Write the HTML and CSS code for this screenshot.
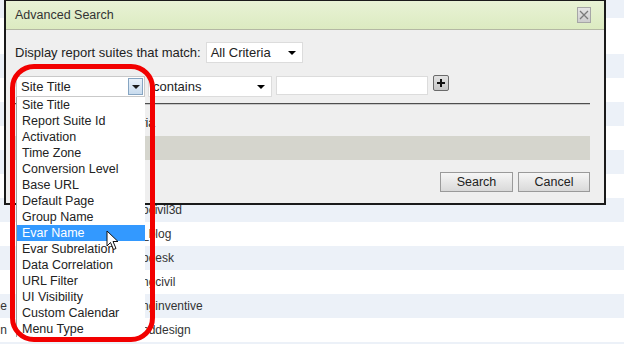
FILE: index.html
```html
<!DOCTYPE html>
<html lang="en">
<head>
    <meta charset="UTF-8">
    <title>Advanced Search</title>
    <link rel="stylesheet" href="styles.css">
</head>
<body>
    <div class="page">
        <div class="band-top"></div>
        <div class="band-head"></div>
        <div class="row alt"></div>
        <div class="row"></div>
        <div class="row alt"></div>
        <div class="row"></div>
        <div class="row alt"></div>
        <div class="row"></div>
        <div class="row alt"><span class="cell-name"></span><span class="cell-id">pcivil3d</span></div>
        <div class="row"><span class="cell-name"></span><span class="cell-id">_blog</span></div>
        <div class="row alt"><span class="cell-name"></span><span class="cell-id">pdesk</span></div>
        <div class="row"><span class="cell-name"></span><span class="cell-id">ngcivil</span></div>
        <div class="row alt"><span class="cell-name">e</span><span class="cell-id">nginventive</span></div>
        <div class="row"><span class="cell-name">n</span><span class="cell-id">nddesign</span></div>
        <div class="row alt last"></div>
    </div>

    <div class="dialog">
        <div class="dialog-title">
            <span>Advanced Search</span>
            <button class="close-btn">
                <svg width="10" height="10" viewBox="0 0 10 10"><path d="M1 1 L9 9 M9 1 L1 9" stroke="#7a7a7a" stroke-width="1.3"/></svg>
            </button>
        </div>
        <div class="dialog-body">
            <div class="match-row">
                <span>Display report suites that match:</span>
                <div class="select select-match"><span>All Criteria</span><i class="caret"></i></div>
            </div>

            <div class="criteria-row">
                <div class="select select-field">
                    <span>Site Title</span>
                    <span class="drop-btn"><i class="caret"></i></span>
                    <ul class="options">
                        <li>Site Title</li>
                        <li>Report Suite Id</li>
                        <li>Activation</li>
                        <li>Time Zone</li>
                        <li>Conversion Level</li>
                        <li>Base URL</li>
                        <li>Default Page</li>
                        <li>Group Name</li>
                        <li class="active">Evar Name</li>
                        <li>Evar Subrelation</li>
                        <li>Data Correlation</li>
                        <li>URL Filter</li>
                        <li>UI Visibility</li>
                        <li>Custom Calendar</li>
                        <li>Menu Type</li>
                    </ul>
                </div>
                <div class="select select-op"><span>contains</span><i class="caret"></i></div>
                <input class="value-input" type="text">
                <button class="add-btn">
                    <svg width="8" height="8" viewBox="0 0 8 8"><path d="M4 0 V8 M0 4 H8" stroke="#111" stroke-width="2"/></svg>
                </button>
            </div>

            <div class="rule"></div>
            <div class="criteria-label">Criteria</div>
            <div class="results-bar"></div>

            <div class="actions">
                <button class="btn btn-search">Search</button>
                <button class="btn btn-cancel">Cancel</button>
            </div>
        </div>
    </div>

    <div class="highlight-ring"></div>

    <svg class="cursor" width="14" height="21" viewBox="0 0 14 21">
        <path d="M1 1 L1 16 L4.5 12.5 L7.5 19.5 L10 18.5 L7 11.5 L12 11.5 Z" fill="#fff" stroke="#111" stroke-width="1" stroke-linejoin="round"/>
    </svg>
</body>
</html>
```

FILE: styles.css
```css
* {
    margin: 0;
    padding: 0;
    box-sizing: border-box;
}

html {
    overflow: hidden;
}

body {
    width: 624px;
    height: 344px;
    overflow: hidden;
    position: relative;
    font-family: "Liberation Sans", Arial, sans-serif;
    background-color: #fff;
    color: #333;
}

/* page behind the dialog */
.band-top {
    height: 18px;
    background-color: #ecf1f8;
}

.band-head {
    height: 36px;
}

.row {
    display: flex;
    align-items: center;
    height: 24px;
    font-size: 12px;
    white-space: nowrap;
}

.row.alt {
    background-color: #ecf1f8;
}

.row.last {
    height: 2px;
}

.cell-name {
    width: 7px;
    display: flex;
    justify-content: flex-end;
}

.cell-id {
    margin-left: 135px;
}

/* dialog */
.dialog {
    position: absolute;
    left: 4px;
    top: -1px;
    width: 602px;
    border: 2px solid #1a1a1a;
    background-color: #efefef;
    font-size: 13px;
    color: #222;
}

.dialog-title {
    height: 29px;
    display: flex;
    align-items: center;
    justify-content: space-between;
    padding: 0 13px 0 9px;
    background: linear-gradient(#e8f2d5, #dcebc1);
    border-bottom: 1px solid #b4b8a4;
    font-size: 12.5px;
    color: #333;
}

.close-btn {
    width: 14px;
    height: 16px;
    display: flex;
    align-items: center;
    justify-content: center;
    border: 1px solid #a6a6a6;
    background: linear-gradient(#e4e4e4, #cdcdcd);
}

.dialog-body {
    padding: 12px 14px 11px 9px;
}

.match-row {
    display: flex;
    align-items: center;
    gap: 5px;
}

.select {
    position: relative;
    height: 21px;
    display: flex;
    align-items: center;
    justify-content: space-between;
    background-color: #fff;
    border: 1px solid #dcdcdc;
    padding-left: 4px;
}

.select-match {
    width: 97px;
    padding-right: 6px;
}

.caret {
    width: 0;
    height: 0;
    border-left: 4px solid transparent;
    border-right: 4px solid transparent;
    border-top: 4px solid #000;
}

.criteria-row {
    display: flex;
    align-items: flex-start;
    margin-top: 13px;
}

.select-field {
    width: 129px;
    margin-left: 1px;
    padding-right: 1px;
    border-color: #c9c9c9;
}

.drop-btn {
    width: 15px;
    height: 17px;
    display: flex;
    align-items: center;
    justify-content: center;
    border: 1px solid #86a5c2;
    background: linear-gradient(#eaf2fa, #c8dbee);
}

.drop-btn .caret {
    border-top-color: #1b1b1b;
}

.options {
    list-style: none;
    position: absolute;
    top: 20px;
    left: -1px;
    width: 129px;
    background-color: #fff;
    border-left: 1px solid #a0a0a0;
    font-size: 12.5px;
    color: #222;
    z-index: 2;
}

.options li {
    height: 16px;
    line-height: 16px;
    padding-left: 5px;
    white-space: nowrap;
}

.options li.active {
    background-color: #3399ff;
    color: #fff;
}

.select-op {
    width: 124px;
    margin-left: 3px;
    padding-right: 6px;
}

.value-input {
    width: 152px;
    height: 19px;
    margin-left: 4px;
    border: 1px solid #dcdcdc;
    background-color: #fff;
}

.add-btn {
    width: 16px;
    height: 16px;
    margin-left: 5px;
    margin-top: -1px;
    display: flex;
    align-items: center;
    justify-content: center;
    border: 1px solid #6a6a6a;
    border-radius: 2px;
    background: linear-gradient(#e2e2e2, #c6c6c6);
}

.rule {
    height: 1px;
    margin-top: 6px;
    background-color: #4e4e4e;
    box-shadow: 0 1px 0 #c8c8c8;
}

.criteria-label {
    height: 14px;
    line-height: 14px;
    margin-top: 12px;
    padding-left: 100px;
    font-size: 12.5px;
}

.results-bar {
    height: 24px;
    margin-top: 6px;
    background-color: #d5d5cd;
}

.actions {
    display: flex;
    justify-content: flex-end;
    gap: 5px;
    margin-top: 12px;
}

.btn {
    height: 20px;
    font-family: "Liberation Sans", Arial, sans-serif;
    font-size: 12.5px;
    color: #222;
    border: 1px solid #9a9a9a;
    background: linear-gradient(#f6f6f6, #d9d9d9);
}

.btn-search {
    width: 73px;
}

.btn-cancel {
    width: 72px;
}

/* annotation overlays */
.highlight-ring {
    position: absolute;
    left: 10px;
    top: 64px;
    width: 145px;
    height: 278px;
    border: 5px solid #f20000;
    border-radius: 24px;
    z-index: 3;
}

.cursor {
    position: absolute;
    left: 106px;
    top: 230px;
    z-index: 4;
}
```
